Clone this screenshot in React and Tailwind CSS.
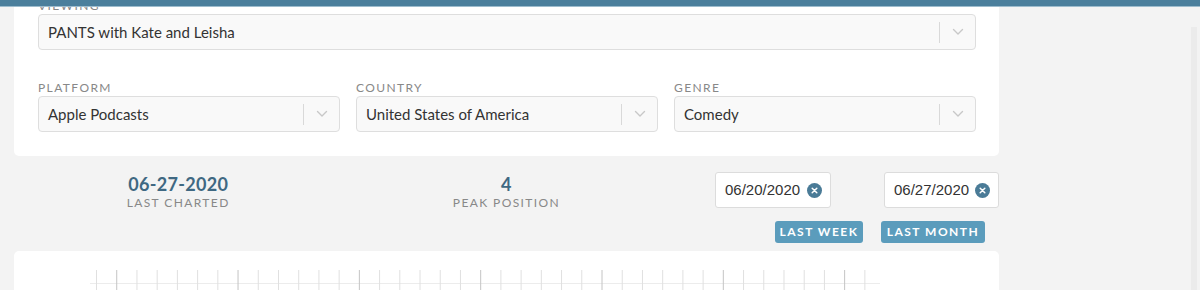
import React from "react";

function Chevron() {
  return (
    <svg width="12" height="8" viewBox="0 0 12 8" className="block">
      <path d="M1.5 1.5 L6 6 L10.5 1.5" fill="none" stroke="#c8c8c8" strokeWidth="1.4" strokeLinecap="round" strokeLinejoin="round" />
    </svg>
  );
}

function Select({ value, className = "" }) {
  return (
    <div className={"flex h-[36px] items-center rounded-[4px] border border-[#dedede] bg-[#f9f9f9] " + className}>
      <div className="flex-1 truncate pl-[9px] text-[15px] text-[#333]">{value}</div>
      <div className="h-[21px] w-px bg-[#d9d9d9]" />
      <div className="flex w-[35px] justify-center">
        <Chevron />
      </div>
    </div>
  );
}

function Field({ label, value }) {
  return (
    <div className="flex flex-col">
      <div className="h-[16px] text-[12px] leading-[16px] tracking-[1.4px] text-[#888]">{label}</div>
      <Select value={value} />
    </div>
  );
}

function DateBox({ value, className = "" }) {
  return (
    <div className={"flex h-[36px] items-center justify-between rounded-[3px] border border-[#dcdcdc] bg-white pl-[9px] pr-[8px] " + className}>
      <span className="text-[15px] text-[#333]" style={{ fontFamily: '"Liberation Sans", Arial, sans-serif' }}>{value}</span>
      <span className="flex h-[15px] w-[15px] items-center justify-center rounded-full bg-[#4a7b97]">
        <svg width="7" height="7" viewBox="0 0 7 7">
          <path d="M1.2 1.2 L5.8 5.8 M5.8 1.2 L1.2 5.8" stroke="white" strokeWidth="1.5" strokeLinecap="round" />
        </svg>
      </span>
    </div>
  );
}

function Stat({ value, label }) {
  return (
    <div className="flex flex-col items-center pt-[17px]">
      <div className="text-[18px] font-bold leading-[22px] tracking-[0.3px] text-[#3f6882]">{value}</div>
      <div className="text-[12px] leading-[16px] tracking-[1.4px] text-[#888]">{label}</div>
    </div>
  );
}

export default function App() {
  const ticks = Array.from({ length: 39 }, (_, i) => ({ x: 96.5 + 20.22 * i - 14, major: i % 6 === 1 }));
  return (
    <div className="relative h-[290px] w-[1200px] overflow-hidden bg-[#f3f3f3]" style={{ fontFamily: 'Lato, "Open Sans", sans-serif' }}>
      <div className="absolute left-0 right-0 top-0 z-10 h-[7px] border-b border-[#9dbccd] bg-[#4b7f9c]" />
      <div className="flex">
        <div className="ml-[14px] flex w-[985px] flex-col">
          <div className="-mt-[2px] rounded-b-[5px] bg-white pb-[24px] pl-[24px] pr-[23px]">
            <Field label="VIEWING" value="PANTS with Kate and Leisha" />
            <div className="mt-[30px] grid grid-cols-3 gap-[16px]">
              <Field label="PLATFORM" value="Apple Podcasts" />
              <Field label="COUNTRY" value="United States of America" />
              <Field label="GENRE" value="Comedy" />
            </div>
          </div>
          <div className="grid h-[95px] grid-cols-3">
            <Stat value="06-27-2020" label="LAST CHARTED" />
            <Stat value="4" label="PEAK POSITION" />
            <div className="flex flex-col items-end pt-[16px]">
              <div className="flex gap-[53px]">
                <DateBox value="06/20/2020" className="w-[116px]" />
                <DateBox value="06/27/2020" className="w-[115px]" />
              </div>
              <div className="mt-[13px] flex gap-[18px] pr-[14px]">
                <div className="flex h-[22px] w-[88px] items-center justify-center rounded-[3px] bg-[#5b9cbc] text-[12px] font-bold tracking-[1.5px] text-white">LAST WEEK</div>
                <div className="flex h-[22px] w-[104px] items-center justify-center rounded-[3px] bg-[#5b9cbc] text-[12px] font-bold tracking-[1.5px] text-white">LAST MONTH</div>
              </div>
            </div>
          </div>
          <div className="h-[60px] rounded-t-[5px] bg-white">
            <svg width="985" height="40" className="block">
              <line x1={90 - 14} y1="32.5" x2={880 - 14} y2="32.5" stroke="#ececec" strokeWidth="1" />
              {ticks.map((t, i) => (
                <line key={i} x1={t.x} y1="19" x2={t.x} y2="40" stroke={t.major ? "#c4c4c4" : "#e0e0e0"} strokeWidth="1" />
              ))}
            </svg>
          </div>
        </div>
        <div className="ml-[192px] mt-[27px] h-[270px] w-[6px] bg-[#ebebeb]" />
      </div>
    </div>
  );
}
